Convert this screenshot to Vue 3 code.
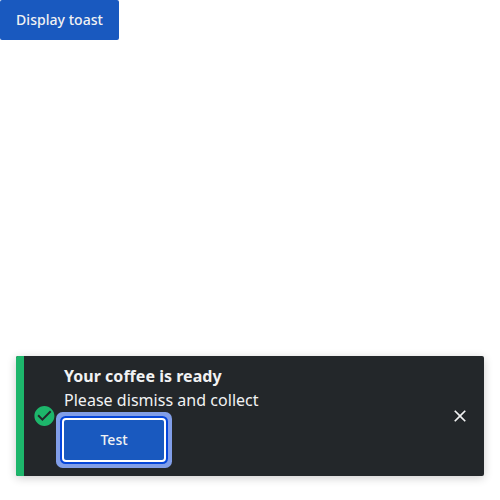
<script setup>
import { ref } from 'vue'

const open = ref(true)
</script>

<template>
  <main class="page">
    <button class="button display" type="button" @click="open = true">Display toast</button>
    <section v-if="open" class="toast" role="status">
      <div class="accent"></div>
      <svg class="status" viewBox="-0.4 0 24 24">
        <path d="M12 2C6.48 2 2 6.48 2 12s4.48 10 10 10 10-4.48 10-10S17.52 2 12 2zm-2 15-5-5 1.41-1.41L10 14.17l7.59-7.59L19 8l-9 9z" />
      </svg>
      <div class="content">
        <div class="title">Your coffee is ready</div>
        <div class="message">Please dismiss and collect</div>
        <button class="button action" type="button">Test</button>
      </div>
      <button class="dismiss" type="button" @click="open = false">
        <svg viewBox="0 0 24 24">
          <path d="M19 6.41 17.59 5 12 10.59 6.41 5 5 6.41 10.59 12 5 17.59 6.41 19 12 13.41 17.59 19 19 17.59 13.41 12z" />
        </svg>
      </button>
    </section>
  </main>
</template>

<style>
body {
  background: #fff;
}
</style>

<style scoped>
.page {
  box-sizing: border-box;
  height: 500px;
  padding-bottom: 24px;
  display: flex;
  flex-direction: column;
  justify-content: space-between;
  align-items: flex-start;
  font-family: "Noto Sans", sans-serif;
}
.button {
  height: 40px;
  border: 0;
  border-radius: 2px;
  background: #1959bf;
  color: #f1f2f3;
  font: 500 14px/24px "Noto Sans", sans-serif;
  letter-spacing: 0.04px;
}
.display {
  width: 119px;
  padding: 0;
}
.toast {
  box-sizing: border-box;
  align-self: stretch;
  height: 120px;
  margin: 0 16px;
  display: flex;
  align-items: center;
  border-radius: 2px;
  background: #23272a;
  color: #f1f2f3;
  box-shadow: 0 2px 10px rgba(0, 0, 0, 0.2);
}
.accent {
  width: 8px;
  align-self: stretch;
  border-radius: 2px 0 0 2px;
  background: #1db66b;
}
.status {
  width: 24px;
  height: 24px;
  margin: 0 8px;
  fill: #1db66b;
}
.content {
  flex: 1;
  align-self: stretch;
  padding-top: 8px;
  font-size: 16px;
  line-height: 24px;
  letter-spacing: 0.03px;
}
.title {
  font-weight: 700;
}
.action {
  display: block;
  width: 100px;
  margin-top: 8px;
  box-shadow: 0 0 0 2px #fff, 0 0 0 4px #0546db, 0 0 0 8px #819ee8;
}
.dismiss {
  width: 32px;
  height: 32px;
  margin-right: 8px;
  padding: 6px;
  border: 0;
  background: transparent;
}
.dismiss svg {
  display: block;
  width: 20px;
  height: 20px;
  fill: #f1f2f3;
}
</style>
